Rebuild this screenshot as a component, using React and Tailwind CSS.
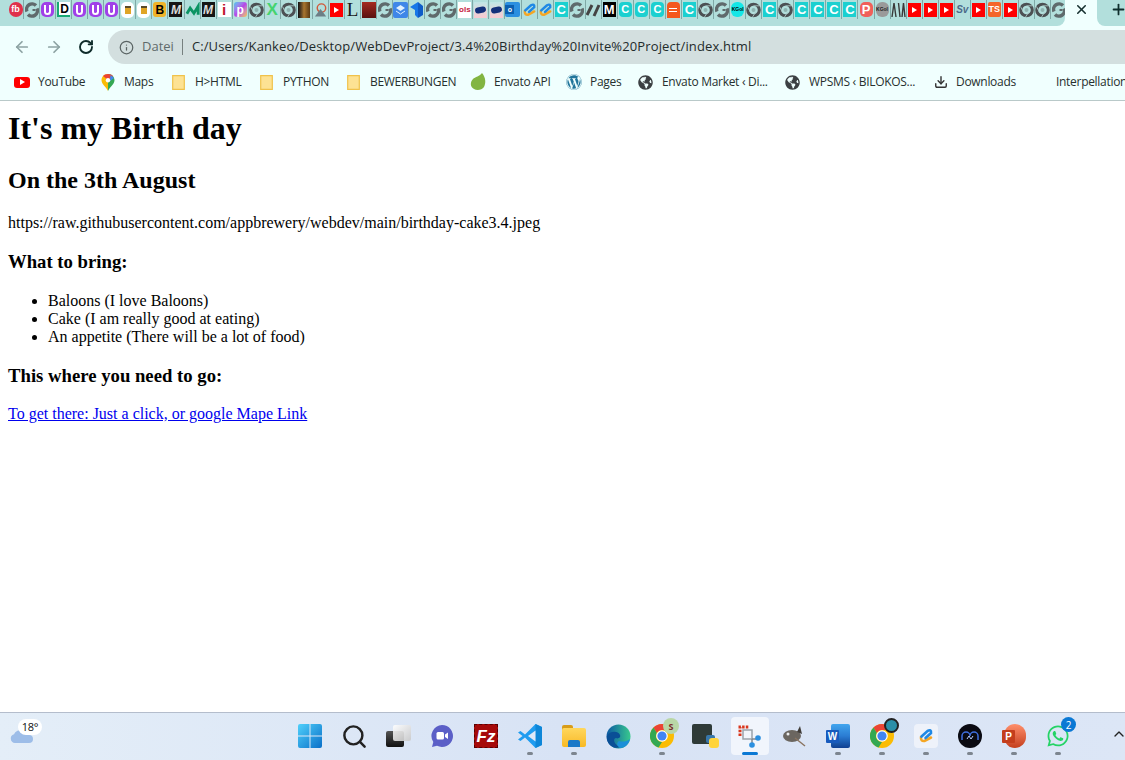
import { ArrowLeft, ArrowRight, RotateCw, Info, X, Plus, Download, ChevronUp, Search } from "lucide-react";
import { FaWordpress, FaGlobeAmericas, FaWhatsapp } from "react-icons/fa";

const TABS = [
  "fb", "grey", "u", "d", "u", "u", "u", "beer", "beer", "b", "m", "n", "m", "i", "p", "chrome", "x", "chrome", "brown", "house", "yt", "l", "red",
  "grey", "layers", "blue", "grey", "grey", "pink", "navy", "navy", "outlook", "zed", "zed", "c", "grey", "slash", "mblack", "c2", "c2", "c2", "orange", "c", "chrome", "grey", "cyan",
  "chrome", "c", "chrome", "c", "c", "c", "c", "pp", "greypill", "mm", "yt", "yt", "yt", "sv", "yt", "ts", "yt", "chrome", "chrome", "grey",
];

function Letter({ bg, color = "text-white", children, round = "rounded-[3px]", size = "text-[12px]", font = "font-bold", w = "w-[13px]" }) {
  return (
    <div className={`${w} h-[15px] flex items-center justify-center leading-none ${bg} ${color} ${round} ${size} ${font} font-['Liberation_Sans',sans-serif]`}>
      {children}
    </div>
  );
}

function GreyIcon() {
  return (
    <svg width="14" height="16" viewBox="0 0 14 16" fill="none" stroke="#5f6a6c" strokeWidth="3.4">
      <path d="M2 9.500A5.500 5.500 0 0 1 11 3.500" />
      <path d="M12 6.500A5.500 5.500 0 0 1 3 12.500" />
      <path d="M7.500 8h3" strokeWidth="2" />
    </svg>
  );
}

function ChromeIcon() {
  return (
    <svg width="15" height="16" viewBox="0 0 15 16" fill="none">
      <circle cx="7.500" cy="8" r="5.800" stroke="#4c5053" strokeWidth="3" />
      <circle cx="7.500" cy="8" r="2" fill="#8fb3b1" />
      <path d="M7.500 3.800h6M4 9.500 1.500 4.500M9.500 10.500 6.500 15" stroke="#a9c6c4" strokeWidth=".9" />
    </svg>
  );
}

function YtBox() {
  return (
    <div className="w-[13px] h-[14px] bg-[#ff0000] flex items-center justify-center">
      <div className="w-0 h-0 border-y-[3px] border-y-transparent border-l-[5px] border-l-white" />
    </div>
  );
}

function Zed({ size = 16 }) {
  return (
    <svg width={size} height={size} viewBox="0 0 16 16" fill="none" strokeWidth="2.6" strokeLinecap="round">
      <path d="M3 9Q2.500 13.500 6.500 13L13 9.500" stroke="#f5a623" />
      <path d="M3.500 8.500 9.500 3Q13.500 1 13 5L7.500 10" stroke="#1e88e5" />
    </svg>
  );
}

function Favicon({ kind }) {
  switch (kind) {
    case "fb":
      return <Letter bg="bg-[#e0314b]" round="rounded-full" size="text-[9px]" w="w-[14px]">fb</Letter>;
    case "grey":
      return <GreyIcon />;
    case "chrome":
      return <ChromeIcon />;
    case "u":
      return (
        <div className="w-[13px] h-[15px] bg-[#a040e8] rounded-[5px] flex items-center justify-center">
          <div className="w-[7px] h-[10px] border-2 border-t-0 border-white rounded-b-[4px]" />
        </div>
      );
    case "d":
      return <Letter bg="bg-white border-l-2 border-l-[#19a974] border-b-2 border-b-[#19a974]" color="text-black" size="text-[12px]" round="rounded-none">D</Letter>;
    case "beer":
      return (
        <div className="w-[13px] h-[16px] bg-white rounded-[5px] flex items-center justify-center">
          <div className="w-[6px] h-[8px] bg-[#e0a526] border-t-2 border-t-[#5a4a28]" />
        </div>
      );
    case "b":
      return <Letter bg="bg-[#f0b429]" color="text-black" size="text-[12px]">B</Letter>;
    case "m":
      return <Letter bg="bg-[#151515]" color="text-[#dddddd]" round="rounded-none" size="text-[12px]"><i>M</i></Letter>;
    case "n":
      return (
        <svg width="16" height="16" viewBox="0 0 16 16" fill="none">
          <path d="M2 12 5.500 6l4 5.500L14 4v9" stroke="#0b9463" strokeWidth="3" />
        </svg>
      );
    case "i":
      return <Letter bg="bg-white" color="text-[#c01631]" round="rounded-none" size="text-[15px]">i</Letter>;
    case "p":
      return <Letter bg="bg-linear-to-br from-[#19c6ee] via-[#b543e8] to-[#f7c51e]" size="text-[12px]">p</Letter>;
    case "x":
      return <span className="text-[#45d36f] text-[17px] leading-none font-bold font-['Liberation_Sans',sans-serif]">X</span>;
    case "brown":
      return <div className="w-[12px] h-[16px] bg-linear-to-r from-[#111111] via-[#a9762f] to-[#5a3a14]" />;
    case "house":
      return (
        <svg width="16" height="16" viewBox="0 0 16 16">
          <circle cx="9" cy="6" r="4.500" fill="none" stroke="#d0583a" strokeWidth="1.500" />
          <path d="M2 15 8 7l6 8z" fill="#6c7f86" />
        </svg>
      );
    case "yt":
      return <YtBox />;
    case "l":
      return <span className="font-['Liberation_Serif',serif] text-[19px] leading-none text-[#1a1a1a]">L</span>;
    case "red":
      return <div className="w-[14px] h-[16px] bg-linear-to-b from-[#a52a20] to-[#5a1210]" />;
    case "layers":
      return (
        <svg width="15" height="16" viewBox="0 0 15 16">
          <rect width="15" height="16" rx="2" fill="#3f87e8" />
          <path d="M7.500 3 12 6 7.500 9 3 6z" fill="#dff0ff" />
          <path d="M3 9l4.500 3L12 9" fill="none" stroke="#dff0ff" />
        </svg>
      );
    case "blue":
      return (
        <svg width="15" height="16" viewBox="0 0 15 16">
          <path d="M1 5 9 0v16l-3-3V8z" fill="#1677e8" />
          <path d="M9 0l5 4v9l-5 3z" fill="#0d5cc8" />
        </svg>
      );
    case "pink":
      return (
        <div className="w-[13px] h-[16px] bg-white text-[#c5213a] text-[8px] font-bold leading-none flex items-center justify-center font-['Liberation_Sans',sans-serif]">ols</div>
      );
    case "navy":
      return (
        <div className="w-[13px] h-[16px] bg-linear-to-b from-[#bfe6e6] to-[#f8c9d0] flex items-center justify-center">
          <div className="w-[11px] h-[6px] bg-[#14307a] rounded-full -rotate-12" />
        </div>
      );
    case "outlook":
      return (
        <div className="relative w-[15px] h-[15px] bg-[#2b8fe0] rounded-[2px]">
          <div className="absolute left-0 top-[3px] w-[9px] h-[9px] bg-[#0b5fb0] text-white text-[7px] font-bold leading-[9px] text-center font-['Liberation_Sans',sans-serif]">o</div>
        </div>
      );
    case "zed":
      return <Zed />;
    case "c":
      return <Letter bg="bg-[#1bd0d0]" size="text-[13px]" round="rounded-none">C</Letter>;
    case "c2":
      return <Letter bg="bg-[#1bd0d0]" size="text-[11px]" round="rounded-[4px]">C</Letter>;
    case "slash":
      return (
        <svg width="15" height="16" viewBox="0 0 15 16" stroke="#444" strokeWidth="3">
          <path d="M1 13 6 3M8 14 13 3" />
        </svg>
      );
    case "mblack":
      return <Letter bg="bg-black" size="text-[13px]" round="rounded-none">M</Letter>;
    case "orange":
      return (
        <div className="w-[13px] h-[16px] bg-[#f4581c] rounded-t-[4px] flex flex-col items-center justify-center gap-[2px]">
          <div className="w-[8px] h-px bg-white" />
          <div className="w-[8px] h-px bg-white" />
        </div>
      );
    case "cyan":
      return <Letter bg="bg-[#14e6e6]" color="text-black" round="rounded-[6px]" size="text-[5px]">KGol</Letter>;
    case "pp":
      return <Letter bg="bg-[#f0605a]" round="rounded-[5px]" size="text-[13px]">P</Letter>;
    case "greypill":
      return <Letter bg="bg-[#9a9a9a]" color="text-[#222222]" round="rounded-[6px]" size="text-[5px]">KGol</Letter>;
    case "mm":
      return (
        <svg width="15" height="16" viewBox="0 0 15 16" fill="none" stroke="#3a3a3a" strokeWidth="1.400">
          <path d="M1 15 3 1l2 14M9 15 7.500 1M11 15l1.500-14 1.500 14" />
        </svg>
      );
    case "sv":
      return <span className="text-[10px] font-bold italic leading-none text-[#4b6a8a] font-['Liberation_Sans',sans-serif]">Sv</span>;
    case "ts":
      return <Letter bg="bg-[#f4652b]" round="rounded-[2px]" size="text-[9px]">TS</Letter>;
    default:
      return null;
  }
}

function TabStrip() {
  return (
    <div className="flex h-[26px] bg-[#f0fffe]">
      <div className="w-[1065px] shrink-0 h-[26px] pl-[8px] flex bg-[#b2dfdc] rounded-br-[8px] overflow-hidden">
        {TABS.map((t, i) => (
          <div key={i} className="w-[16.05px] shrink-0 h-[19px] flex items-center justify-center border-r border-[#7fa8a6]">
            <Favicon kind={t} />
          </div>
        ))}
      </div>
      <div className="w-[32px] shrink-0 flex items-start justify-center pt-[2px]">
        <X className="w-[15px] h-[15px] text-[#16302f]" strokeWidth={2.5} />
      </div>
      <div className="flex-1 bg-[#b2dfdc] rounded-bl-[8px] pl-[13px] pt-[1px]">
        <Plus className="w-[17px] h-[17px] text-[#0f2e2d]" strokeWidth={2.5} />
      </div>
    </div>
  );
}

function Toolbar() {
  return (
    <div className="h-[38px] pt-[4px] flex bg-[#f0fffe]">
      <div className="w-[108px] h-[34px] shrink-0 flex items-center pl-[13px] gap-[14px]">
        <ArrowLeft className="w-[18px] h-[18px] text-[#8da3a3]" strokeWidth={2.3} />
        <ArrowRight className="w-[18px] h-[18px] text-[#8da3a3]" strokeWidth={2.3} />
        <RotateCw className="w-[16px] h-[16px] ml-[1px] text-[#0e2b2a]" strokeWidth={2.8} />
      </div>
      <div className="flex-1 h-[34px] bg-[#d3dfdf] rounded-l-[17px] flex items-center pl-[11px] text-[13px] font-['Open_Sans','Noto_Sans',sans-serif]">
        <Info className="w-[15px] h-[15px] text-[#5a6464]" strokeWidth={2} />
        <span className="ml-[8px] text-[#5f6a6a]">Datei</span>
        <span className="ml-[8px] w-px h-[16px] bg-[#77807f]" />
        <span className="ml-[9px] text-[#1f2b2b] whitespace-nowrap tracking-[0.12px]">C:/Users/Kankeo/Desktop/WebDevProject/3.4%20Birthday%20Invite%20Project/index.html</span>
      </div>
    </div>
  );
}

function Folder() {
  return (
    <svg width="13" height="15" viewBox="0 0 13 15">
      <path d="M.7.7h11.600v13.600H.7z" fill="#fde293" stroke="#f0c24b" strokeWidth="1.200" />
    </svg>
  );
}

const BOOKMARKS = [
  { label: "YouTube", w: "w-[90px]", gap: "ml-[14px]", textGap: "ml-[8px]", icon: (
    <div className="w-[16px] h-[11px] bg-[#ff0000] rounded-[3px] flex items-center justify-center">
      <div className="w-0 h-0 border-y-[3px] border-y-transparent border-l-[5px] border-l-white" />
    </div>
  ) },
  { label: "Maps", w: "w-[68px]", gap: "ml-[11px]", textGap: "ml-[9px]", icon: (
    <svg width="14" height="17" viewBox="0 0 14 17">
      <path d="M7 0C3 0 .5 3 .5 6.300 .5 10 5 13 7 17z" fill="#fbbc04" />
      <path d="M7 0c4 0 6.500 3 6.500 6.300C13.500 10 9 13 7 17z" fill="#34a853" />
      <path d="M2 2C3 .8 5 0 7 0s4 .8 5 2L7 6z" fill="#ea4335" />
      <path d="M9.500 1 13 4 9 7z" fill="#4285f4" />
      <circle cx="7" cy="6.300" r="2.200" fill="#fff" />
    </svg>
  ) },
  { label: "H>HTML", w: "w-[88px]", gap: "ml-[14px]", textGap: "ml-[10px]", icon: <Folder /> },
  { label: "PYTHON", w: "w-[87px]", gap: "ml-[14px]", textGap: "ml-[10px]", icon: <Folder /> },
  { label: "BEWERBUNGEN", w: "w-[127px]", gap: "ml-[14px]", textGap: "ml-[10px]", icon: <Folder /> },
  { label: "Envato API", w: "w-[96px]", gap: "ml-[10px]", textGap: "ml-[8px]", icon: (
    <svg width="16" height="18" viewBox="0 0 16 18">
      <path d="M12 0c4 5 4 10 2 14-2 3-7 4-10 2C0 14 0 9 3 6c2-2 7-3 9-6z" fill="#82b541" />
    </svg>
  ) },
  { label: "Pages", w: "w-[72px]", gap: "ml-[10px]", textGap: "ml-[8px]", icon: <FaWordpress className="w-[16px] h-[16px] text-[#21759b]" /> },
  { label: "Envato Market ‹ Di...", w: "w-[147px]", gap: "ml-[10px]", textGap: "ml-[9px]", icon: <FaGlobeAmericas className="w-[15px] h-[15px] text-[#3c4043]" /> },
  { label: "WPSMS ‹ BILOKOS...", w: "w-[148px]", gap: "ml-[10px]", textGap: "ml-[9px]", icon: <FaGlobeAmericas className="w-[15px] h-[15px] text-[#3c4043]" /> },
  { label: "Downloads", w: "w-[132px]", gap: "ml-[11px]", textGap: "ml-[8px]", icon: <Download className="w-[14px] h-[14px] text-[#333333]" strokeWidth={2.4} /> },
];

function Bookmarks() {
  return (
    <div className="h-[37px] flex items-center bg-[#f0fffe] border-b border-[#b9c9c9] text-[12px] tracking-[-0.3px] text-[#27302f] font-['Open_Sans','Noto_Sans',sans-serif] overflow-hidden whitespace-nowrap">
      {BOOKMARKS.map((b) => (
        <div key={b.label} className={`flex items-center shrink-0 ${b.w}`}>
          <span className={`${b.gap} shrink-0`}>{b.icon}</span>
          <span className={b.textGap}>{b.label}</span>
        </div>
      ))}
      <span className="ml-[1px]">Interpellation</span>
    </div>
  );
}

function Page() {
  return (
    <div className="flex-1 px-[8px] pt-[9px] bg-white text-black text-[16px] leading-[18px] font-['Liberation_Serif',serif]">
      <h1 className="text-[32px] leading-[37px] font-bold mb-[20px]">It's my Birth day</h1>
      <h2 className="text-[24px] leading-[27px] font-bold mb-[20px]">On the 3th August</h2>
      <p className="mb-[19px]">https://raw.githubusercontent.com/appbrewery/webdev/main/birthday-cake3.4.jpeg</p>
      <h3 className="text-[18.72px] leading-[21px] font-bold mb-[20px]">What to bring:</h3>
      <ul className="list-disc pl-[40px] mb-[19px]">
        <li>Baloons (I love Baloons)</li>
        <li>Cake (I am really good at eating)</li>
        <li>An appetite (There will be a lot of food)</li>
      </ul>
      <h3 className="text-[18.72px] leading-[21px] font-bold mb-[19px]">This where you need to go:</h3>
      <p><a href="#map" className="text-[#0000ee] underline">To get there: Just a click, or google Mape Link</a></p>
    </div>
  );
}

function WinLogo() {
  return (
    <svg width="24" height="24" viewBox="0 0 24 24">
      <defs>
        <linearGradient id="win" x1="0" y1="0" x2="1" y2="1">
          <stop offset="0" stopColor="#4fd0fb" />
          <stop offset="1" stopColor="#0a6fc8" />
        </linearGradient>
      </defs>
      <path d="M0 2a2 2 0 0 1 2-2h9.500v11.500H0zM12.500 0H22a2 2 0 0 1 2 2v9.500H12.500zM0 12.500h11.500V24H2a2 2 0 0 1-2-2zM12.500 12.500H24V22a2 2 0 0 1-2 2h-9.500z" fill="url(#win)" />
    </svg>
  );
}

function ChromeLogo({ children }) {
  return (
    <div className="relative w-[24px] h-[24px]">
      <svg width="24" height="24" viewBox="0 0 24 24">
        <circle cx="12" cy="12" r="12" fill="#fbbc04" />
        <path d="M12 0a12 12 0 0 1 10.400 6H12a6 6 0 0 0-5.200 3L3.500 3.500A12 12 0 0 1 12 0z" fill="#ea4335" />
        <path d="M3.500 3.500 6.800 9a6 6 0 0 0 5.200 9l-3.500 5.500A12 12 0 0 1 3.500 3.500z" fill="#34a853" />
        <circle cx="12" cy="12" r="5.800" fill="#fff" />
        <circle cx="12" cy="12" r="4.600" fill="#4285f4" />
      </svg>
      {children}
    </div>
  );
}

const TASKBAR = [
  { id: "start", icon: <WinLogo /> },
  { id: "search", icon: <Search className="w-[27px] h-[27px] text-[#222222]" strokeWidth={2.2} /> },
  { id: "views", icon: (
    <div className="relative w-[25px] h-[22px]">
      <div className="absolute left-0 bottom-0 w-[18px] h-[16px] rounded-[2px] bg-linear-to-b from-[#555555] to-[#111111]" />
      <div className="absolute right-0 top-0 w-[18px] h-[16px] rounded-[2px] bg-linear-to-br from-white/90 to-[#c8c8c8]/90" />
    </div>
  ) },
  { id: "chat", icon: (
    <svg width="24" height="24" viewBox="0 0 24 24">
      <path d="M12 1a11 11 0 1 1-5 20.800L2 23l1.300-5A11 11 0 0 1 12 1z" fill="#5b5fc7" />
      <rect x="6.500" y="8" width="7.500" height="7.500" rx="1.500" fill="#fff" />
      <path d="M15 10.500 18 8.500v6.500l-3-2z" fill="#fff" />
    </svg>
  ) },
  { id: "filezilla", icon: (
    <div className="w-[24px] h-[24px] bg-[#a60a0a] border border-dashed border-[#5a0000] flex items-center justify-center text-white text-[17px] font-bold italic leading-none font-['Liberation_Sans',sans-serif]">Fz</div>
  ) },
  { id: "vscode", dot: true, icon: (
    <svg width="24" height="24" viewBox="0 0 24 24">
      <path d="M17.500 0 24 3v18l-6.500 3L7 13.500 2.500 17 0 15.500 4.500 12 0 8.500 2.500 7 7 10.500z" fill="#1f9cf0" />
      <path d="M17.500 0 24 3v18l-6.500 3z" fill="#0e86d8" />
      <path d="M17.500 6.500v11L10 12z" fill="#dfe8f7" />
    </svg>
  ) },
  { id: "files", dot: true, icon: (
    <div className="relative w-[24px] h-[22px]">
      <div className="absolute top-0 left-0 w-[11px] h-[5px] bg-[#d89c1a] rounded-t-[2px]" />
      <div className="absolute top-[3px] left-0 w-[24px] h-[19px] bg-linear-to-b from-[#ffd75c] to-[#f8b91e] rounded-[2px]" />
      <div className="absolute bottom-0 left-[6px] w-[12px] h-[7px] bg-[#1a78c8] rounded-t-[2px]" />
    </div>
  ) },
  { id: "edge", icon: (
    <svg width="25" height="25" viewBox="0 0 25 25">
      <defs>
        <linearGradient id="edge" x1="0" y1="0" x2="1" y2="0">
          <stop offset="0" stopColor="#0c59a4" />
          <stop offset="1" stopColor="#38c98d" />
        </linearGradient>
      </defs>
      <circle cx="12.500" cy="12.500" r="12" fill="url(#edge)" />
      <path d="M1 12c2-5 11-6 13-1 1 3-2 4-4 3-3 0-3 6 4 9-8 3-14-4-13-11z" fill="#0a4f96" />
      <path d="M13 17c3 1 7 1 11-2-1 5-5 9-10 9-3-2-4-5-1-7z" fill="#1a8fd8" />
    </svg>
  ) },
  { id: "chrome1", dot: true, icon: (
    <ChromeLogo>
      <div className="absolute -top-[6px] -right-[5px] w-[16px] h-[16px] rounded-full bg-[#b9d7a6] flex items-center justify-center text-[9px] font-bold text-[#7c2a2a] leading-none">S</div>
    </ChromeLogo>
  ) },
  { id: "py", icon: (
    <div className="relative w-[24px] h-[24px]">
      <div className="absolute left-[-2px] top-0 w-[20px] h-[20px] bg-[#2e3a38] rounded-[2px]" />
      <div className="absolute right-[3px] top-[11px] w-[9px] h-[8px] bg-[#3776ab] rounded-[2px]" />
      <div className="absolute right-[-1px] top-[14px] w-[10px] h-[10px] bg-[#ffd43b] rounded-[3px]" />
    </div>
  ) },
  { id: "snip", active: true, icon: (
    <svg width="24" height="24" viewBox="0 0 24 24" fill="none">
      <path d="M2 12V3h9" stroke="#d9361c" strokeWidth="3" strokeDasharray="2.500 1.200" />
      <path d="M5 6h9v9H5z" stroke="#9aa3aa" strokeWidth="1.500" />
      <path d="M14 15h5M14 15v4" stroke="#7f8890" strokeWidth="1.500" />
      <circle cx="20" cy="14" r="2.800" fill="#2b8fe0" />
      <circle cx="14" cy="21" r="2.800" fill="#2b8fe0" />
    </svg>
  ) },
  { id: "gimp", icon: (
    <svg width="24" height="22" viewBox="0 0 24 22">
      <ellipse cx="10" cy="11" rx="9" ry="6" fill="#6b6660" />
      <path d="M15 7 18 1l2 8z" fill="#3f3b37" />
      <path d="M13 13 23 21" stroke="#8a7460" strokeWidth="1.500" />
      <circle cx="6" cy="9" r="1.500" fill="#eee" />
    </svg>
  ) },
  { id: "word", dot: true, icon: (
    <div className="relative w-[24px] h-[24px]">
      <div className="absolute right-0 top-0 w-[19px] h-[24px] rounded-[2px] bg-linear-to-b from-[#41a5ee] via-[#2b7cd3] to-[#103f91]" />
      <div className="absolute left-0 top-[6px] w-[13px] h-[13px] bg-[#185abd] rounded-[1px] text-white text-[10px] font-bold flex items-center justify-center leading-none font-['Liberation_Sans',sans-serif]">W</div>
    </div>
  ) },
  { id: "chrome2", dot: true, icon: (
    <ChromeLogo>
      <div className="absolute -top-[6px] -right-[5px] w-[15px] h-[15px] rounded-full bg-[#2a8fa8] border-2 border-[#222222]" />
    </ChromeLogo>
  ) },
  { id: "zed", dot: true, icon: (
    <div className="w-[24px] h-[24px] bg-[#eef2fa] rounded-[4px] flex items-center justify-center">
      <Zed size={16} />
    </div>
  ) },
  { id: "wave", dot: true, icon: (
    <div className="w-[24px] h-[24px] rounded-full bg-[#0a0a12] flex items-center justify-center">
      <svg width="18" height="12" viewBox="0 0 18 12" fill="none" stroke="#3f6fe0" strokeWidth="1.500">
        <path d="M1 10V6a4 4 0 0 1 8 0 4 4 0 0 1 8 0v4" />
        <path d="M6 9l2-3 2 3 2-3" stroke="#bcd0ff" strokeWidth="1" />
      </svg>
    </div>
  ) },
  { id: "ppt", dot: true, icon: (
    <div className="relative w-[24px] h-[24px]">
      <div className="absolute right-0 top-0 w-[22px] h-[24px] rounded-full bg-linear-to-b from-[#ff8f6b] to-[#c43e1c]" />
      <div className="absolute left-0 top-[6px] w-[13px] h-[13px] bg-[#c43e1c] rounded-[1px] text-white text-[10px] font-bold flex items-center justify-center leading-none font-['Liberation_Sans',sans-serif]">P</div>
    </div>
  ) },
  { id: "wa", dot: true, icon: (
    <div className="relative w-[24px] h-[24px]">
      <FaWhatsapp className="w-[24px] h-[24px] text-[#25d366]" />
      <div className="absolute -top-[7px] -right-[6px] w-[15px] h-[15px] rounded-full bg-[#0a78d4] text-white text-[10px] flex items-center justify-center leading-none font-['Open_Sans',sans-serif]">2</div>
    </div>
  ) },
];

function Taskbar() {
  return (
    <div className="h-[48px] flex items-stretch relative border-t border-[#b4bdcc] bg-linear-to-r from-[#e4eef8] via-[#d8e3f5] to-[#dce6f6]">
      <div className="w-[288px] shrink-0 relative">
        <svg className="absolute left-[10px] top-[16px]" width="24" height="14" viewBox="0 0 24 14">
          <path d="M5 14a4.500 4.500 0 0 1-1-8.800A8 6 0 0 1 13 1a7 6 0 0 1 6 5 4 4 0 0 1 0 8z" fill="#9dbde8" />
        </svg>
        <span className="absolute left-[18px] top-[6px] w-[24px] bg-white rounded-full text-center text-[11px] leading-[16px] tracking-[-0.3px] text-[#111111] font-['Open_Sans',sans-serif]">18°</span>
      </div>
      {TASKBAR.map((t) => (
        <div key={t.id} className="relative w-[44px] shrink-0 flex items-center justify-center pb-[1px]">
          {t.active && <div className="absolute left-[3px] top-[4px] w-[38px] h-[38px] rounded-[4px] bg-[#f1f5fc]" />}
          <div className="relative">{t.icon}</div>
          {t.dot && <div className="absolute bottom-[5px] left-[19px] w-[6px] h-[3px] rounded-full bg-[#7d858f]" />}
          {t.active && <div className="absolute bottom-[5px] left-[14px] w-[16px] h-[3px] rounded-full bg-[#0a78d4]" />}
        </div>
      ))}
      <div className="absolute right-[-2px] top-[13px]">
        <ChevronUp className="w-[16px] h-[16px] text-[#222222]" strokeWidth={2} />
      </div>
    </div>
  );
}

export default function App() {
  return (
    <div className="w-[1125px] h-[760px] flex flex-col overflow-hidden">
      <TabStrip />
      <Toolbar />
      <Bookmarks />
      <Page />
      <Taskbar />
    </div>
  );
}
